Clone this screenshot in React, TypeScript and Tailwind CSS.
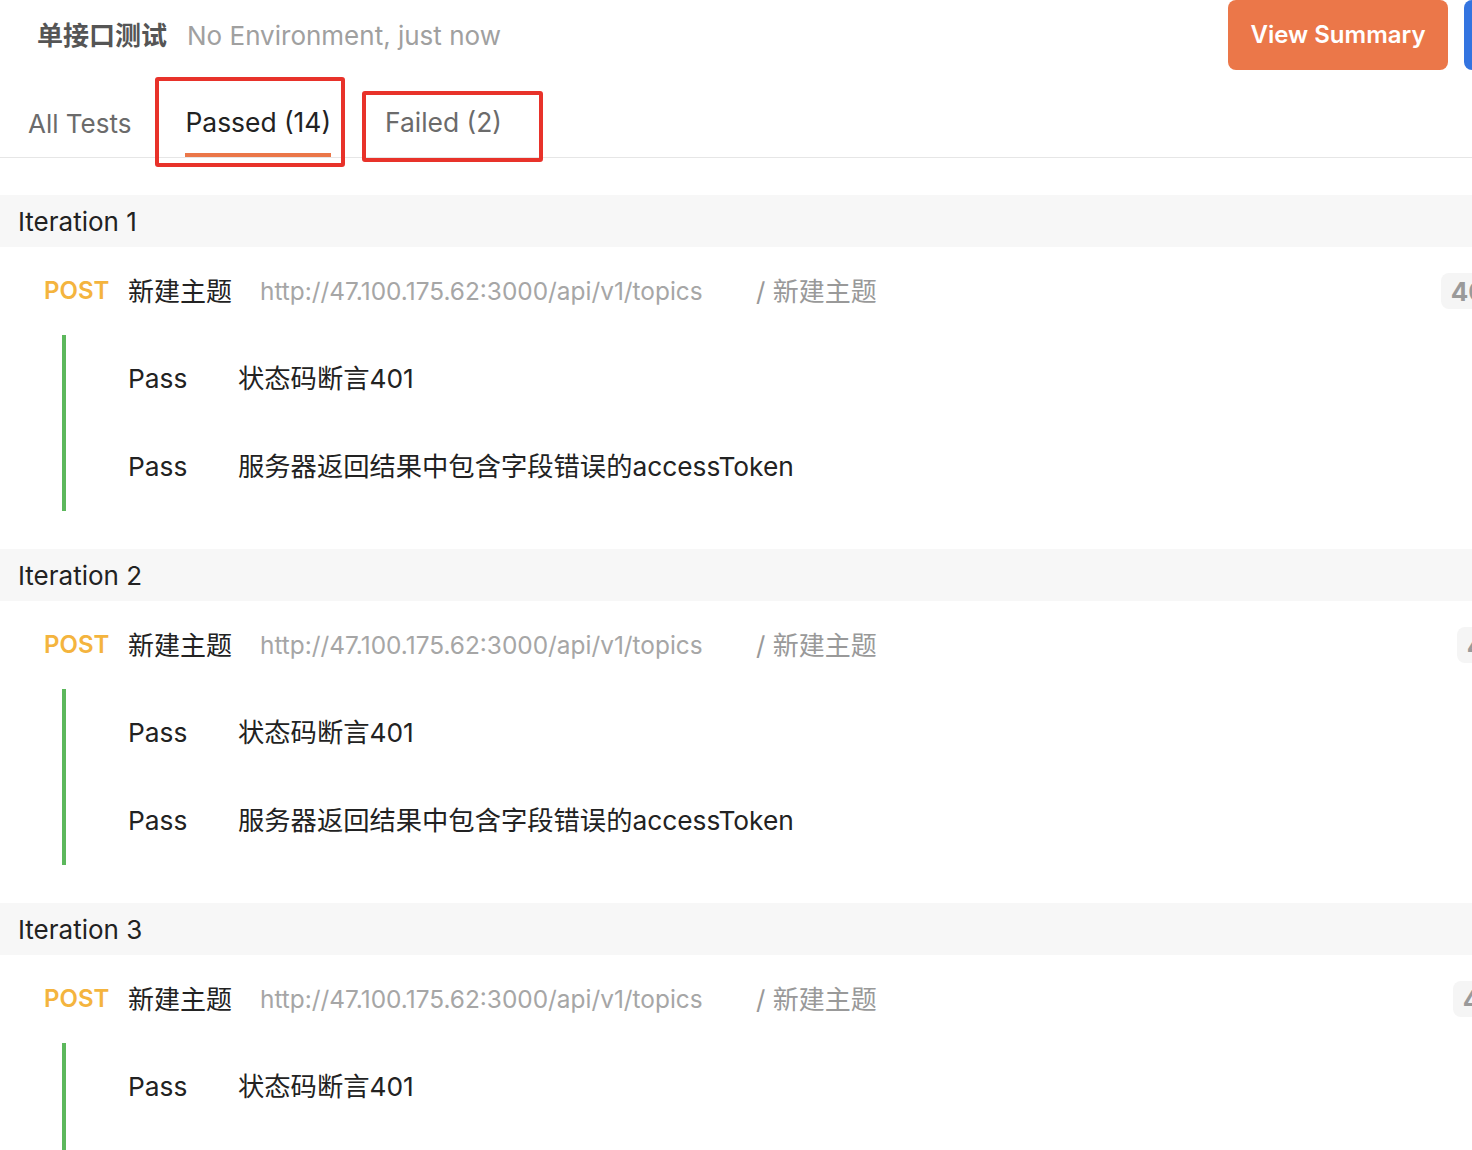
const font = { fontFamily: 'Inter, "Noto Sans CJK SC", sans-serif' }

function Iteration({ n, badgeGap, tests }: { n: number; badgeGap: number; tests: string[] }) {
  return (
    <section className="mb-[38px]">
      <div className="h-[52px] bg-[#f7f7f7] flex items-center pl-[18px] text-[26px] text-[#222]">
        Iteration {n}
      </div>
      <div className="h-[88px] flex items-center pl-[44px] whitespace-nowrap">
        <span className="w-[84px] shrink-0 text-[24px] font-semibold text-[#f4b43e]">POST</span>
        <span className="w-[132px] shrink-0 text-[26px] text-[#222]">新建主题</span>
        <span className="w-[496px] shrink-0 text-[24.4px] text-[#a6a6a6]">http://47.100.175.62:3000/api/v1/topics</span>
        <span className="shrink-0 text-[26px] text-[#999]">/ 新建主题</span>
        <span
          className="shrink-0 h-[36px] px-[10px] rounded-[8px] bg-[#f5f5f5] text-[26px] font-bold text-[#9a9a9a] flex items-center"
          style={{ marginLeft: badgeGap }}
        >
          401 Unauthorized
        </span>
      </div>
      <div className="ml-[62px] border-l-[4px] border-[#5cb85c]">
        {tests.map((t, i) => (
          <div key={i} className="h-[88px] flex items-center pl-[62px] text-[26.3px] text-[#222] whitespace-nowrap">
            <span className="w-[110px] shrink-0">Pass</span>
            <span>{t}</span>
          </div>
        ))}
      </div>
    </section>
  )
}

export default function App() {
  const tests = ['状态码断言401', '服务器返回结果中包含字段错误的accessToken']

  return (
    <div className="relative w-[1472px] h-[1150px] overflow-hidden bg-white" style={font}>

      {/* Header */}
      <div className="h-[70px] flex items-start">
        <div className="h-[70px] w-[1228px] shrink-0 flex items-center pl-[37px] gap-[20px] whitespace-nowrap">
          <span className="text-[26px] font-bold text-[#555]">单接口测试</span>
          <span className="text-[26px] text-[#a0a0a0]">No Environment, just now</span>
        </div>
        <button className="h-[70px] w-[220px] shrink-0 rounded-[8px] bg-[#eb7749] text-white text-[24px] font-semibold">
          View Summary
        </button>
        <div className="h-[70px] w-[80px] shrink-0 ml-[16px] rounded-[8px] bg-[#3374e0]" />
      </div>

      {/* Tabs */}
      <div className="h-[88px] flex items-end pl-[28px] border-b border-[#e6e6e6]">
        <div className="pb-[10px] text-[26px] text-[#6b6b6b] border-b-[4px] border-transparent">All Tests</div>
        <div className="ml-[54px] pb-[10px] text-[26.4px] text-[#222] border-b-[4px] border-[#eb7749]">Passed (14)</div>
        <div className="ml-[54px] pb-[10px] text-[26.4px] text-[#6b6b6b] border-b-[4px] border-transparent">Failed (2)</div>
      </div>

      {/* Annotation boxes */}
      <div className="absolute left-[155px] top-[77px] w-[190px] h-[90px] border-[4px] border-[#e8322a] rounded-[3px]" />
      <div className="absolute left-[362px] top-[91px] w-[181px] h-[71px] border-[4px] border-[#e8322a] rounded-[3px]" />

      <div className="pt-[37px]">
        <Iteration n={1} badgeGap={564} tests={tests} />
        <Iteration n={2} badgeGap={580} tests={tests} />
        <Iteration n={3} badgeGap={576} tests={tests} />
      </div>
    </div>
  )
}
